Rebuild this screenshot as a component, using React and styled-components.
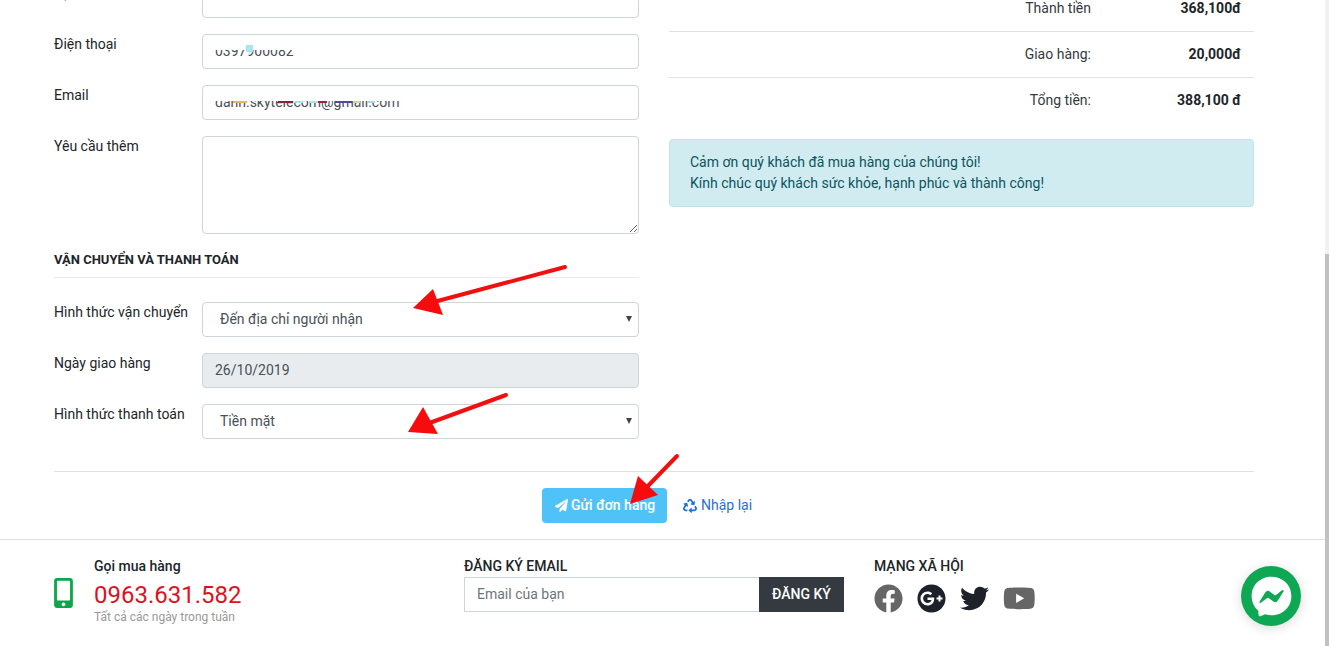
import React from 'react';
import styled, { createGlobalStyle } from 'styled-components';
import {
	FaMobileAlt,
	FaPaperPlane,
	FaRecycle,
	FaFacebook,
	FaGooglePlus,
	FaTwitter,
	FaYoutube,
	FaFacebookMessenger,
} from 'react-icons/fa';

const GlobalStyle = createGlobalStyle`
	* { box-sizing: border-box; }
	html, body {
		margin: 0;
		height: 646px;
		overflow: hidden;
		background: #fff;
		font-family: Roboto, "Liberation Sans", sans-serif;
		font-size: 14px;
		line-height: 21px;
		color: #212529;
	}
`;

// Leftover smudges on the masked inputs
const phoneBlips = [{ left: 44, top: 11, width: 7, height: 7, color: '#a5e6f0' }];
const emailBlips = [
	{ left: 31, top: 16, width: 14, height: 2, color: '#e0b56a' },
	{ left: 76, top: 16, width: 15, height: 2, color: '#7a2a35' },
	{ left: 91, top: 16, width: 10, height: 2, color: '#a8e4ee' },
	{ left: 108, top: 16, width: 9, height: 2, color: '#a8e4ee' },
	{ left: 116, top: 16, width: 9, height: 2, color: '#8a2a3a' },
	{ left: 133, top: 16, width: 17, height: 2, color: '#4a4a9a' },
	{ left: 151, top: 16, width: 7, height: 2, color: '#e0cf9a' },
	{ left: 165, top: 16, width: 8, height: 2, color: '#a8d4ee' },
];

const MaskedInput = ({ value, blips }) => (
	<InputWrap>
		<Input value={value} readOnly />
		<Mask />
		{blips.map((b) => (
			<Blip key={b.left} $b={b} />
		))}
	</InputWrap>
);

const App = () => {
	return (
		<Page>
			<GlobalStyle />
			<Main>
				<Content>
					<Columns>
						<FormColumn>
							<FormRow>
								<Label>Địa chỉ</Label>
								<Input readOnly />
							</FormRow>
							<FormRow>
								<Label>Điện thoại</Label>
								<MaskedInput value="0397900082" blips={phoneBlips} />
							</FormRow>
							<FormRow>
								<Label>Email</Label>
								<MaskedInput value="danh.skytelecom@gmail.com" blips={emailBlips} />
							</FormRow>
							<FormRow>
								<Label>Yêu cầu thêm</Label>
								<TextArea />
							</FormRow>
							<SectionTitle>VẬN CHUYỂN VÀ THANH TOÁN</SectionTitle>
							<FormRow>
								<Label>Hình thức vận chuyển</Label>
								<SelectWrap>
									<Select defaultValue="a">
										<option value="a">Đến địa chỉ người nhận</option>
									</Select>
								</SelectWrap>
							</FormRow>
							<FormRow>
								<Label>Ngày giao hàng</Label>
								<Input value="26/10/2019" disabled />
							</FormRow>
							<FormRow>
								<Label>Hình thức thanh toán</Label>
								<SelectWrap>
									<Select defaultValue="a">
										<option value="a">Tiền mặt</option>
									</Select>
								</SelectWrap>
							</FormRow>
						</FormColumn>
						<SummaryColumn>
							<SummaryRow>
								<SummaryLabel>Thành tiền</SummaryLabel>
								<SummaryValue>368,100đ</SummaryValue>
							</SummaryRow>
							<SummaryRow>
								<SummaryLabel>Giao hàng:</SummaryLabel>
								<SummaryValue>20,000đ</SummaryValue>
							</SummaryRow>
							<SummaryRow>
								<SummaryLabel>Tổng tiền:</SummaryLabel>
								<SummaryValue>388,100 đ</SummaryValue>
							</SummaryRow>
							<Alert>
								Cảm ơn quý khách đã mua hàng của chúng tôi!
								<br />
								Kính chúc quý khách sức khỏe, hạnh phúc và thành công!
							</Alert>
						</SummaryColumn>
					</Columns>
					<Divider />
					<Actions>
						<SendButton>
							<FaPaperPlane size={13} />
							Gửi đơn hàng
						</SendButton>
						<ResetLink>
							<FaRecycle size={14} />
							Nhập lại
						</ResetLink>
					</Actions>
				</Content>
				<Footer>
					<FooterGrid>
						<PhoneBlock>
							<PhoneIcon />
							<div>
								<FooterTitle>Gọi mua hàng</FooterTitle>
								<PhoneNumber>0963.631.582</PhoneNumber>
								<PhoneNote>Tất cả các ngày trong tuần</PhoneNote>
							</div>
						</PhoneBlock>
						<div>
							<FooterTitle>ĐĂNG KÝ EMAIL</FooterTitle>
							<Subscribe>
								<SubscribeInput placeholder="Email của bạn" />
								<SubscribeButton>ĐĂNG KÝ</SubscribeButton>
							</Subscribe>
						</div>
						<div>
							<FooterTitle>MẠNG XÃ HỘI</FooterTitle>
							<SocialRow>
								<FaFacebook size={29} color="#666" />
								<FaGooglePlus size={29} color="#1d2129" />
								<FaTwitter size={29} color="#1d2129" />
								<FaYoutube size={32.6} color="#666" />
							</SocialRow>
						</div>
					</FooterGrid>
				</Footer>
			</Main>
			<ScrollTrack>
				<ScrollThumb />
			</ScrollTrack>
			<Arrows viewBox="0 0 1329 646">
				<line x1="565" y1="267" x2="430" y2="303" />
				<polygon points="413,308 433,289 443,315" />
				<line x1="506" y1="395" x2="424" y2="425" />
				<polygon points="408,432 423,407 438,434" />
				<line x1="677" y1="456" x2="645" y2="489" />
				<polygon points="630,504 638,476 658,495" />
			</Arrows>
			<MessengerBubble>
				<FaFacebookMessenger size={41} color="#fff" />
			</MessengerBubble>
		</Page>
	);
};

// Styled Components
const Page = styled.div`
	position: relative;
	display: flex;
	width: 1329px;
	height: 646px;
	overflow: hidden;
`;

const Main = styled.div`
	flex: 1;
	min-width: 0;
	height: 646px;
	overflow: hidden;
`;

const Content = styled.div`
	width: 1200px;
	margin: -17px 0 0 54px;
`;

const Columns = styled.div`
	display: grid;
	grid-template-columns: 585px 585px;
	column-gap: 30px;
`;

const FormColumn = styled.div`
	display: flex;
	flex-direction: column;
`;

const FormRow = styled.div`
	display: grid;
	grid-template-columns: 148px 437px;
	margin-bottom: 16px;
`;

const Label = styled.label`
	line-height: 21px;
`;

const InputWrap = styled.div`
	position: relative;
`;

const Input = styled.input`
	display: block;
	width: 100%;
	height: 35px;
	padding: 5px 12px 7px;
	border: 1px solid #ced4da;
	border-radius: 4px;
	background: ${(p) => (p.disabled ? '#e9ecef' : '#fff')};
	color: #495057;
	font: 14px/21px Roboto, sans-serif;
	outline: none;
`;

const Mask = styled.div`
	position: absolute;
	top: 1px;
	left: 8px;
	right: 8px;
	height: 15px;
	background: #fff;
`;

const Blip = styled.span`
	position: absolute;
	left: ${(p) => p.$b.left}px;
	top: ${(p) => p.$b.top}px;
	width: ${(p) => p.$b.width}px;
	height: ${(p) => p.$b.height}px;
	background: ${(p) => p.$b.color};
`;

const TextArea = styled.textarea`
	display: block;
	width: 100%;
	height: 98px;
	border: 1px solid #ced4da;
	border-radius: 4px;
	background: #fff;
	outline: none;
`;

const SelectWrap = styled.div`
	position: relative;

	&::after {
		content: '';
		position: absolute;
		top: 14px;
		right: 7px;
		border-left: 3px solid transparent;
		border-right: 3px solid transparent;
		border-top: 6px solid #444;
		pointer-events: none;
	}
`;

const Select = styled.select`
	display: block;
	width: 100%;
	height: 35px;
	padding: 6px 20px 7px 17px;
	border: 1px solid #ced4da;
	border-radius: 4px;
	background: #fff;
	color: #495057;
	font: 14px/21px Roboto, sans-serif;
	outline: none;
	appearance: none;
`;

const SectionTitle = styled.h3`
	margin: 0 0 24px;
	padding-bottom: 8px;
	border-bottom: 1px solid #e9ecef;
	font-size: 13px;
	line-height: 19px;
	font-weight: 700;
	color: #212529;
`;

const SummaryColumn = styled.div`
	display: flex;
	flex-direction: column;
	padding-top: 3px;
`;

const SummaryRow = styled.div`
	display: flex;
	height: 46px;
	padding: 12px 0;
	border-bottom: 1px solid #dee2e6;

	&:nth-child(3) {
		border-bottom: 0;
		height: 45px;
	}
`;

const SummaryLabel = styled.div`
	flex: 1;
	text-align: right;
	color: #343a40;
`;

const SummaryValue = styled.div`
	width: 163px;
	padding-right: 13px;
	text-align: right;
	font-weight: 700;
`;

const Alert = styled.div`
	margin-top: 16px;
	padding: 12px 20px;
	border: 1px solid #bee5eb;
	border-radius: 4px;
	background: #d1ecf1;
	color: #0c5460;
`;

const Divider = styled.hr`
	margin: 16px 0 16px;
	border: 0;
	border-top: 1px solid #dee2e6;
`;

const Actions = styled.div`
	display: flex;
	align-items: center;
	padding-left: 488px;
	margin-bottom: 16px;
`;

const SendButton = styled.button`
	display: flex;
	align-items: center;
	gap: 3px;
	width: 125px;
	height: 35px;
	padding: 0 13px;
	border: 0;
	border-radius: 4px;
	background: #4fc3f7;
	color: #fff;
	font: 500 14px/21px Roboto, sans-serif;
	white-space: nowrap;

	svg {
		flex-shrink: 0;
	}
`;

const ResetLink = styled.a`
	display: flex;
	align-items: center;
	gap: 4px;
	margin-left: 16px;
	color: #1f6fe0;
`;

const Footer = styled.footer`
	border-top: 1px solid #dee2e6;
	padding: 16px 0 0 54px;
`;

const FooterGrid = styled.div`
	display: grid;
	grid-template-columns: 410px 410px 380px;
`;

const PhoneBlock = styled.div`
	display: flex;
	align-items: flex-start;
	gap: 21px;
`;

const PhoneIcon = styled(FaMobileAlt)`
	width: 19px;
	height: 30px;
	margin-top: 22px;
	color: #0ea54c;
`;

const FooterTitle = styled.div`
	font-weight: 500;
	line-height: 21px;
	color: #212529;
`;

const PhoneNumber = styled.div`
	margin-top: 4px;
	font-size: 24px;
	line-height: 28px;
	color: #e0101e;
`;

const PhoneNote = styled.div`
	font-size: 12px;
	line-height: 16px;
	color: #999;
`;

const Subscribe = styled.div`
	display: flex;
	width: 380px;
	height: 35px;
`;

const SubscribeInput = styled.input`
	flex: 1;
	min-width: 0;
	padding: 6px 12px;
	border: 1px solid #ced4da;
	border-right: 0;
	color: #495057;
	font: 14px/21px Roboto, sans-serif;
	outline: none;

	&::placeholder {
		color: #6c757d;
	}
`;

const SubscribeButton = styled.button`
	width: 85px;
	border: 0;
	background: #343a40;
	color: #fff;
	font: 500 14px/21px Roboto, sans-serif;
`;

const SocialRow = styled.div`
	display: flex;
	align-items: center;
	gap: 14px;
	margin-top: 5px;
`;

const ScrollTrack = styled.div`
	width: 4px;
	height: 646px;
	padding-top: 254px;
	background: #f1f1f1;
`;

const ScrollThumb = styled.div`
	height: 392px;
	background: #c1c1c1;
`;

const Arrows = styled.svg`
	position: absolute;
	top: 0;
	left: 0;
	width: 1329px;
	height: 646px;
	pointer-events: none;

	line {
		stroke: #f01010;
		stroke-width: 4;
		stroke-linecap: round;
	}
	polygon {
		fill: #f60c0c;
	}
`;

const MessengerBubble = styled.div`
	position: absolute;
	left: 1241px;
	top: 566px;
	display: flex;
	align-items: center;
	justify-content: center;
	width: 60px;
	height: 60px;
	border-radius: 50%;
	background: #0ea854;
	box-shadow: 0 2px 12px rgba(0, 0, 0, 0.15);
`;

export default App;
